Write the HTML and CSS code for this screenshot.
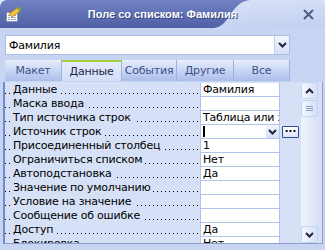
FILE: index.html
```html
<!DOCTYPE html>
<html lang="ru">
<head>
  <meta charset="UTF-8">
  <title>Поле со списком: Фамилия</title>
  <link rel="stylesheet" href="styles.css">
</head>
<body>
  <div class="window">
    <div class="titlebar">
      <svg class="title-bg" width="325" height="28" viewBox="0 0 325 28">
        <defs>
          <linearGradient id="dark" x1="0" y1="0" x2="0" y2="1">
            <stop offset="0" stop-color="#7082c4"/>
            <stop offset="1" stop-color="#4f5fa5"/>
          </linearGradient>
          <linearGradient id="light" x1="0" y1="0" x2="1" y2="1">
            <stop offset="0" stop-color="#e4ebfb"/>
            <stop offset="1" stop-color="#c2cff0"/>
          </linearGradient>
        </defs>
        <rect width="325" height="28" fill="url(#light)"/>
        <path d="M0 0 H250 C240 1 235 8 230 15 C225 23 221 27 214 28 H0 Z" fill="url(#dark)"/>
      </svg>
      <svg class="app-icon" width="17" height="17" viewBox="0 0 17 17">
        <rect x="1.5" y="6.5" width="11" height="9" fill="#fff" stroke="#8593b8"/>
        <path d="M3 9.5h2M6 9.5h5M3 11.5h2M6 11.5h5M3 13.5h2M6 13.5h5" stroke="#9aa4bf"/>
        <path d="M4 8 L12 2 L15 5 L7 11 Z" fill="#f2c53a" stroke="#b8862a" stroke-width="0.8"/>
        <path d="M12 2 L14 0.5 L16.5 3 L15 5 Z" fill="#6fb23c"/>
      </svg>
      <span class="title">Поле со списком: Фамилия</span>
      <svg class="close" width="11" height="11" viewBox="0 0 11 11">
        <path d="M1 1 L10 10 M10 1 L1 10" stroke="#4e5d83" stroke-width="2"/>
      </svg>
    </div>

    <div class="content">
      <div class="combo">
        <span class="combo-text">Фамилия</span>
        <span class="drop-btn">
          <svg width="9" height="6" viewBox="0 0 9 6"><path d="M1 1 L4.5 4.5 L8 1" fill="none" stroke="#1e2640" stroke-width="2"/></svg>
        </span>
      </div>

      <ul class="tabs">
        <li class="tab tab-1">Макет</li>
        <li class="tab tab-2 active">Данные</li>
        <li class="tab tab-3">События</li>
        <li class="tab tab-4">Другие</li>
        <li class="tab tab-5">Все</li>
      </ul>

      <div class="sheet">
        <div class="props">
          <div class="row"><span class="label"><span>Данные</span></span><span class="value">Фамилия</span></div>
          <div class="row"><span class="label"><span>Маска ввода</span></span><span class="value"></span></div>
          <div class="row"><span class="label"><span>Тип источника строк</span></span><span class="value">Таблица или запрос</span></div>
          <div class="row"><span class="label"><span>Источник строк</span></span><span class="value current"><i class="caret"></i><span class="cell-drop"><svg width="9" height="6" viewBox="0 0 9 6"><path d="M1 1 L4.5 4.5 L8 1" fill="none" stroke="#1e2640" stroke-width="2"/></svg></span></span><span class="extra"><span class="build-btn">...</span></span></div>
          <div class="row"><span class="label"><span>Присоединенный столбец</span></span><span class="value">1</span></div>
          <div class="row"><span class="label"><span>Ограничиться списком</span></span><span class="value">Нет</span></div>
          <div class="row"><span class="label"><span>Автоподстановка</span></span><span class="value">Да</span></div>
          <div class="row"><span class="label"><span>Значение по умолчанию</span></span><span class="value"></span></div>
          <div class="row"><span class="label"><span>Условие на значение</span></span><span class="value"></span></div>
          <div class="row"><span class="label"><span>Сообщение об ошибке</span></span><span class="value"></span></div>
          <div class="row"><span class="label"><span>Доступ</span></span><span class="value">Да</span></div>
          <div class="row"><span class="label"><span>Блокировка</span></span><span class="value">Нет</span></div>
        </div>

        <div class="scrollbar">
          <span class="sb-btn">
            <svg width="9" height="6" viewBox="0 0 9 6"><path d="M1 5 L4.5 1.5 L8 5" fill="none" stroke="#1e2640" stroke-width="2"/></svg>
          </span>
          <span class="sb-thumb">
            <svg width="7" height="6" viewBox="0 0 7 6"><path d="M0 0.5h7M0 2.5h7M0 4.5h7" stroke="#8c9cc4"/></svg>
          </span>
          <span class="sb-track"></span>
          <span class="sb-btn">
            <svg width="9" height="6" viewBox="0 0 9 6"><path d="M1 1 L4.5 4.5 L8 1" fill="none" stroke="#1e2640" stroke-width="2"/></svg>
          </span>
        </div>
      </div>
    </div>
  </div>
</body>
</html>
```

FILE: styles.css
```css
* {
  box-sizing: border-box;
}

body {
  margin: 0;
  background: #dfe6f6;
  font-family: "DejaVu Sans", Verdana, sans-serif;
  font-size: 11px;
  letter-spacing: -0.2px;
  color: #000;
}

.window {
  width: 325px;
  height: 250px;
  overflow: hidden;
  background: #c8d5f2;
  border-radius: 7px 7px 0 0;
}

/* Title bar */
.titlebar {
  position: relative;
  height: 28px;
  display: flex;
  align-items: center;
}

.title-bg {
  position: absolute;
  left: 0;
  top: 0;
}

.app-icon {
  position: relative;
  margin-left: 5px;
}

.title {
  position: relative;
  flex: 1;
  text-align: center;
  color: #fff;
  font-family: "Liberation Sans", Arial, sans-serif;
  font-weight: bold;
  font-size: 11px;
  letter-spacing: 0;
  text-shadow: 1px 1px 0 #39467c;
}

.close {
  position: relative;
  margin-right: 11px;
}

/* Body */
.content {
  padding: 7px 2px 0 3px;
}

.combo {
  display: flex;
  align-items: center;
  height: 20px;
  margin: 0 33px 0 2px;
  background: #fff;
  border: 1px solid #a9bde7;
}

.combo-text {
  flex: 1;
  padding-left: 3px;
}

.drop-btn,
.cell-drop {
  display: flex;
  align-items: center;
  justify-content: center;
  width: 15px;
  height: 18px;
  background: linear-gradient(#f3f6fe, #d5dff6);
  border-left: 1px solid #c3d1f1;
}

/* Tabs */
.tabs {
  display: flex;
  list-style: none;
  margin: 5px 0 1px 2px;
  padding: 0;
  height: 21px;
}

.tab {
  display: flex;
  align-items: center;
  justify-content: center;
  background: linear-gradient(#e7eefc, #aabeea);
  border-right: 1px solid #9cb1df;
  color: #3f5189;
}

.tab.active {
  background: linear-gradient(#e4ebfb, #d3ddf5);
  border-top: 2px solid #a6cf3f;
  color: #1b2648;
}

.tab-1 { width: 57px; }
.tab-2 { width: 60px; }
.tab-3 { width: 55px; }
.tab-4 { width: 57px; }
.tab-5 { width: 56px; }

/* Property sheet */
.sheet {
  display: flex;
  height: 162px;
  background: #d6e0f6;
  border-left: 2px solid #7189cd;
  border-right: 1px solid #8d9ecc;
  border-bottom: 1px solid #8d9ecc;
}

.props {
  width: 296px;
  padding-top: 1px;
  overflow: hidden;
}

.row {
  display: grid;
  grid-template-columns: 195px 80px 21px;
  height: 14px;
}

.label {
  padding-left: 8px;
  line-height: 13px;
  white-space: nowrap;
  overflow: hidden;
  background: linear-gradient(to right, #000 1px, transparent 1px) 0 10px / 4px 1px repeat-x;
}

.label span {
  background: #d6e0f6;
  padding-right: 3px;
}

.value {
  display: flex;
  align-items: center;
  padding-left: 2px;
  line-height: 13px;
  white-space: nowrap;
  overflow: hidden;
  background: #fff;
  border-left: 1px solid #b2c5ec;
  border-right: 1px solid #b2c5ec;
  border-bottom: 1px solid #b2c5ec;
}

.value.current {
  justify-content: space-between;
  padding-right: 0;
}

.caret {
  width: 2px;
  height: 11px;
  background: #000;
}

.cell-drop {
  height: 13px;
  width: 13px;
  border-left: none;
}

.extra {
  display: flex;
  align-items: center;
  justify-content: center;
}

.build-btn {
  width: 17px;
  height: 12px;
  overflow: hidden;
  border: 1px solid #2f4a9a;
  border-radius: 1px;
  background: linear-gradient(#fbfcff, #dbe4f8);
  font-size: 10px;
  font-weight: bold;
  letter-spacing: 0;
  line-height: 4px;
  text-align: center;
}

/* Scrollbar */
.scrollbar {
  width: 17px;
  display: flex;
  flex-direction: column;
  background: linear-gradient(to right, #eef3fd, #d9e3f7);
}

.sb-btn,
.sb-thumb {
  display: flex;
  align-items: center;
  justify-content: center;
  height: 17px;
  background: linear-gradient(to right, #f4f7fe, #d6e0f6);
  border: 1px solid #c5d3f1;
  border-radius: 2px;
}

.sb-thumb {
  margin-top: 1px;
}

.sb-track {
  flex: 1;
}
```
